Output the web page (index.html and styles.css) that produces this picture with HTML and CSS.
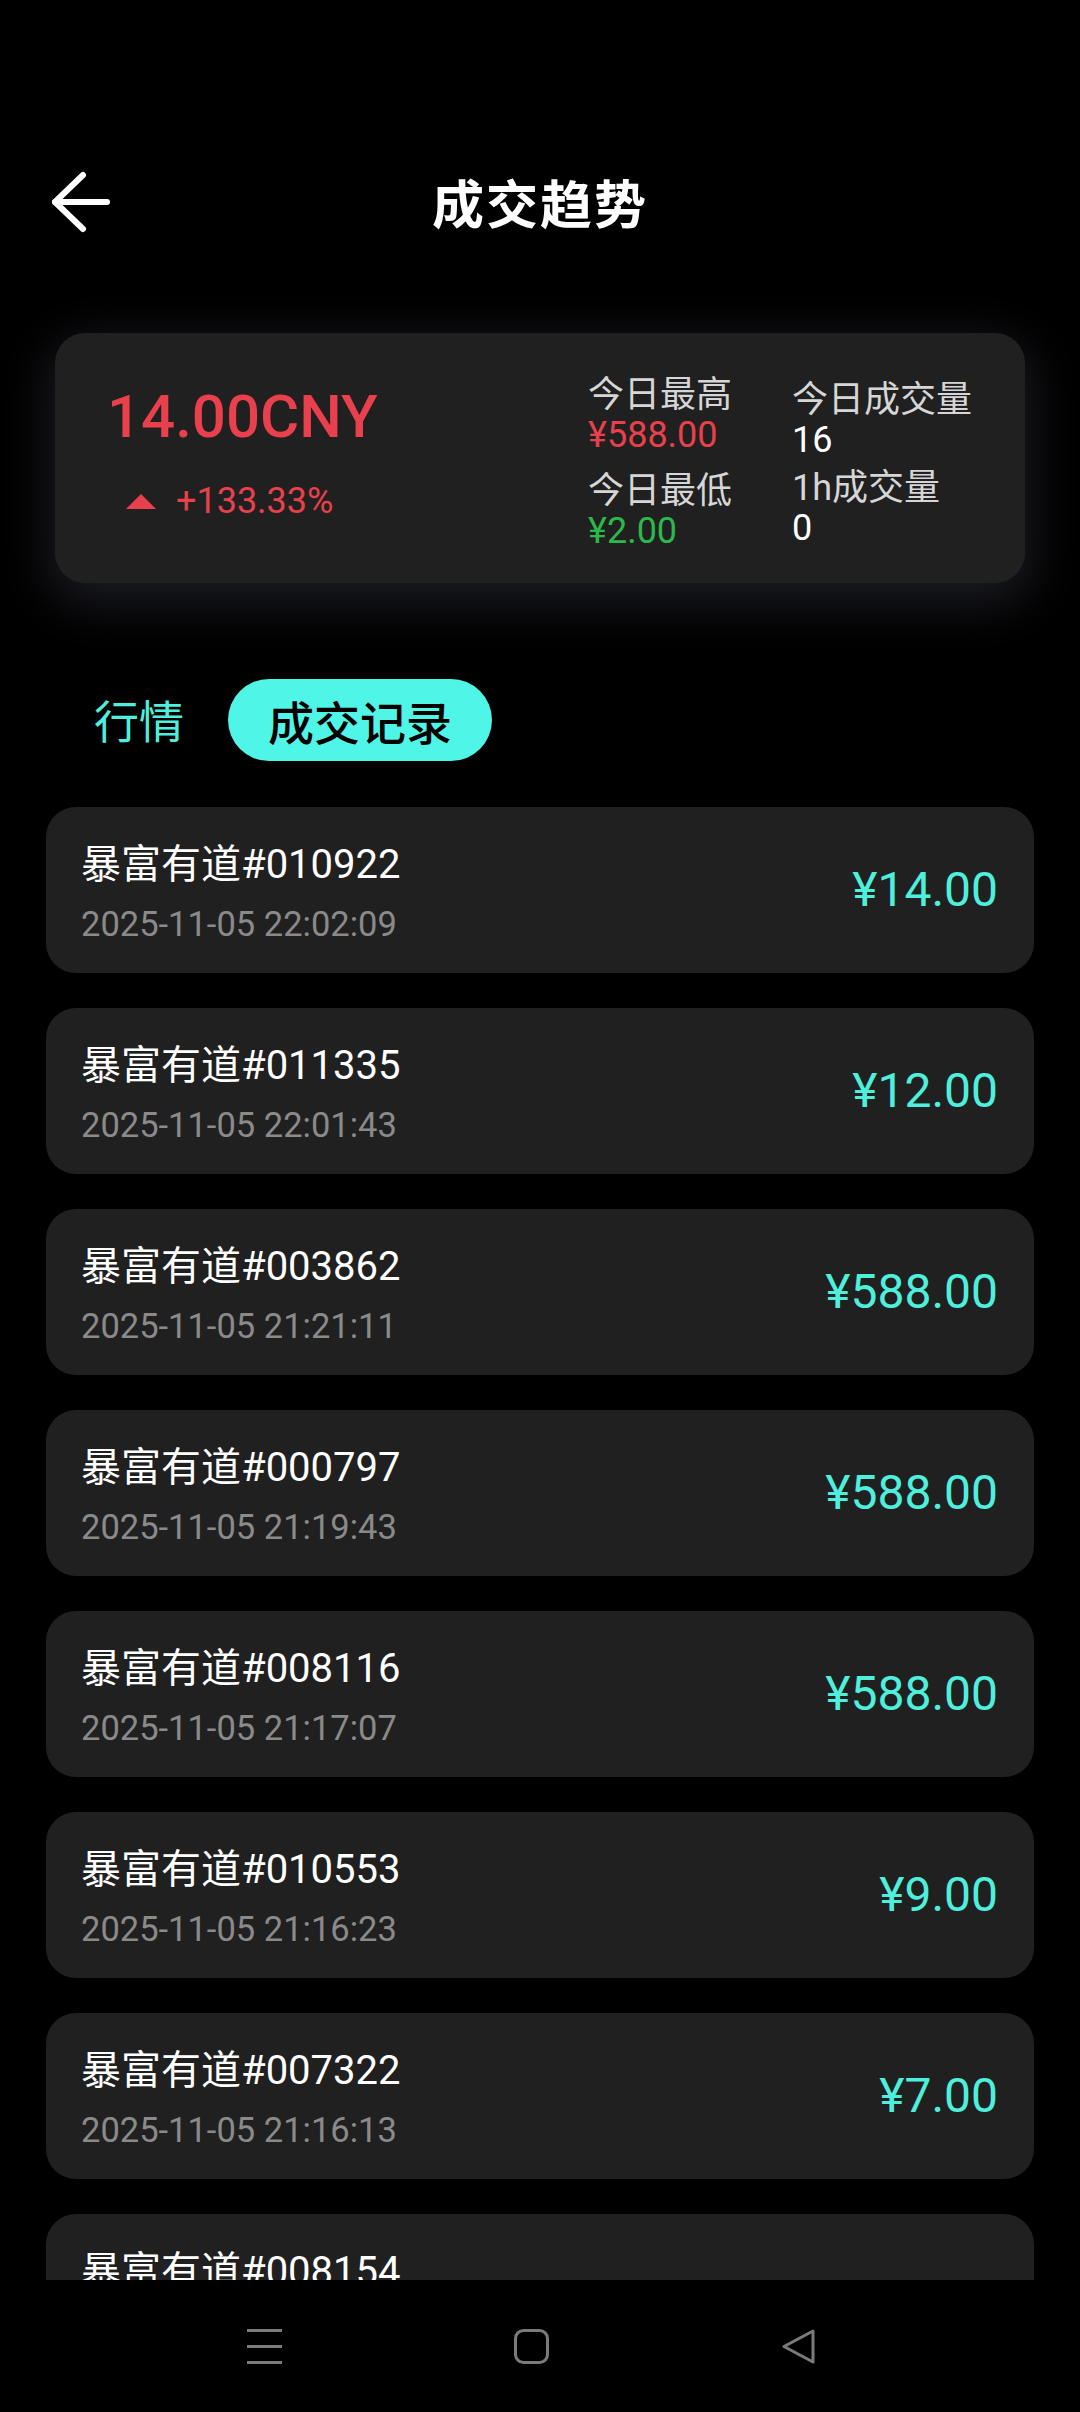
FILE: index.html
```html
<!DOCTYPE html>
<html lang="zh-CN">
<head>
<meta charset="utf-8">
<title>成交趋势</title>
<link rel="stylesheet" href="styles.css">
</head>
<body>
<div class="screen">
  <div class="content">
    <header class="topbar">
      <div class="back">
        <svg width="64" height="64" viewBox="0 0 64 64" fill="none" stroke="#ffffff" stroke-width="6" stroke-linecap="round" stroke-linejoin="round">
          <path d="M35 5 L7 32 L35 59"/>
          <path d="M7 32 H59"/>
        </svg>
      </div>
      <h1 class="title">成交趋势</h1>
      <div></div>
    </header>

    <section class="summary">
      <div class="summary-main">
        <div class="price-big">14.00CNY</div>
        <div class="change">
          <span class="tri"></span>
          <span>+133.33%</span>
        </div>
      </div>
      <div class="stats">
        <div class="stat-col stat-col-a">
          <div class="stat">
            <div class="stat-label">今日最高</div>
            <div class="stat-value red">¥588.00</div>
          </div>
          <div class="stat">
            <div class="stat-label">今日最低</div>
            <div class="stat-value green">¥2.00</div>
          </div>
        </div>
        <div class="stat-col stat-col-b">
          <div class="stat">
            <div class="stat-label">今日成交量</div>
            <div class="stat-value">16</div>
          </div>
          <div class="stat">
            <div class="stat-label">1h成交量</div>
            <div class="stat-value">0</div>
          </div>
        </div>
      </div>
    </section>

    <nav class="tabs">
      <span class="tab">行情</span>
      <span class="tab tab-active">成交记录</span>
    </nav>

    <ul class="list">
      <li class="item">
        <div class="item-info"><div class="item-name">暴富有道#010922</div><div class="item-time">2025-11-05 22:02:09</div></div>
        <div class="item-price">¥14.00</div>
      </li>
      <li class="item">
        <div class="item-info"><div class="item-name">暴富有道#011335</div><div class="item-time">2025-11-05 22:01:43</div></div>
        <div class="item-price">¥12.00</div>
      </li>
      <li class="item">
        <div class="item-info"><div class="item-name">暴富有道#003862</div><div class="item-time">2025-11-05 21:21:11</div></div>
        <div class="item-price">¥588.00</div>
      </li>
      <li class="item">
        <div class="item-info"><div class="item-name">暴富有道#000797</div><div class="item-time">2025-11-05 21:19:43</div></div>
        <div class="item-price">¥588.00</div>
      </li>
      <li class="item">
        <div class="item-info"><div class="item-name">暴富有道#008116</div><div class="item-time">2025-11-05 21:17:07</div></div>
        <div class="item-price">¥588.00</div>
      </li>
      <li class="item">
        <div class="item-info"><div class="item-name">暴富有道#010553</div><div class="item-time">2025-11-05 21:16:23</div></div>
        <div class="item-price">¥9.00</div>
      </li>
      <li class="item">
        <div class="item-info"><div class="item-name">暴富有道#007322</div><div class="item-time">2025-11-05 21:16:13</div></div>
        <div class="item-price">¥7.00</div>
      </li>
      <li class="item">
        <div class="item-info"><div class="item-name">暴富有道#008154</div></div>
      </li>
    </ul>
  </div>

  <footer class="navbar">
    <svg class="nav-icon" width="35" height="35" viewBox="0 0 35 35" fill="none" stroke="#7a7a7a" stroke-width="3">
      <path d="M0 1.5 H35 M0 17.5 H35 M0 33.5 H35"/>
    </svg>
    <svg class="nav-icon" width="35" height="35" viewBox="0 0 35 35" fill="none" stroke="#7a7a7a" stroke-width="3">
      <rect x="1.5" y="1.5" width="32" height="32" rx="8"/>
    </svg>
    <svg class="nav-icon" width="35" height="35" viewBox="0 0 35 35" fill="none" stroke="#7a7a7a" stroke-width="3" stroke-linejoin="round" stroke-linecap="round">
      <path d="M32 2 L3 17.5 L32 33 Z"/>
    </svg>
  </footer>
</div>
</body>
</html>
```

FILE: styles.css
```css
* {
  box-sizing: border-box;
  margin: 0;
  padding: 0;
}

html, body {
  background: #000;
}

body {
  font-family: "Roboto", "Noto Sans CJK SC", sans-serif;
  color: #fff;
}

.screen {
  width: 1080px;
  height: 2412px;
  display: flex;
  flex-direction: column;
  overflow: hidden;
  background: #000;
}

.content {
  height: 2280px;
  overflow: hidden;
  flex: none;
}

.topbar {
  display: grid;
  grid-template-columns: 1fr auto 1fr;
  align-items: center;
  height: 262px;
  padding-top: 142px;
}

.back {
  padding-left: 48px;
  display: flex;
  align-items: center;
}

.back svg {
  display: block;
}

.title {
  font-family: "Noto Sans CJK SC", sans-serif;
  font-size: 52px;
  font-weight: 700;
  line-height: 120px;
  letter-spacing: 2px;
}

.summary {
  margin: 71px 55px 0;
  background: #202020;
  border-radius: 30px;
  padding: 42px 53px 32px 52px;
  display: flex;
  box-shadow: 0 14px 50px 6px rgba(46, 48, 58, 0.6);
}

.summary-main {
  flex: 1;
  margin-top: 12px;
}

.price-big {
  color: #e8404c;
  font-size: 60px;
  font-weight: 500;
  line-height: 60px;
}

.change {
  margin-top: 36px;
  display: flex;
  align-items: center;
  gap: 20px;
  padding-left: 19px;
  color: #e8404c;
  font-size: 36px;
  line-height: 36px;
}

.tri {
  width: 0;
  height: 0;
  border-left: 15px solid transparent;
  border-right: 15px solid transparent;
  border-bottom: 15px solid #e8404c;
}

.stats {
  display: flex;
}

.stat-col {
  display: flex;
  flex-direction: column;
}

.stat-col-a {
  width: 204px;
  gap: 16px;
}

.stat-col-b {
  width: 180px;
  gap: 8px;
  padding-top: 5px;
}

.stat-label {
  font-size: 36px;
  line-height: 40px;
  color: #d6d6d6;
  white-space: nowrap;
}

.stat-value {
  font-size: 36px;
  line-height: 40px;
  color: #fff;
}

.red {
  color: #e8404c;
}

.green {
  color: #2db84c;
}

.tabs {
  margin-top: 96px;
  height: 82px;
  display: flex;
  align-items: center;
  gap: 44px;
  padding-left: 94px;
}

.tab {
  font-family: "Noto Sans CJK SC", sans-serif;
  font-size: 45px;
  line-height: 82px;
  color: #4eefdc;
}

.tab-active {
  background: #4ff5e6;
  color: #000;
  font-weight: 500;
  font-size: 46px;
  padding: 0 40px;
  border-radius: 41px;
}

.list {
  list-style: none;
  margin-top: 46px;
  padding: 0 46px;
  display: flex;
  flex-direction: column;
  gap: 35px;
}

.item {
  height: 166px;
  flex: none;
  background: #202020;
  border-radius: 30px;
  padding: 0 36px 0 35px;
  display: flex;
  align-items: center;
  justify-content: space-between;
}

.item-info {
  display: flex;
  flex-direction: column;
  gap: 13px;
  padding-top: 8px;
  align-self: stretch;
  justify-content: flex-start;
  margin-top: 26px;
}

.item-name {
  font-size: 40px;
  line-height: 48px;
  color: #fff;
}

.item-time {
  font-size: 34.5px;
  line-height: 44px;
  color: #8a8a8a;
}

.item-price {
  font-size: 48px;
  line-height: 48px;
  color: #4eefdc;
}

.navbar {
  height: 132px;
  flex: none;
  display: flex;
  align-items: center;
  gap: 232px;
  padding-left: 247px;
  background: #000;
}

.nav-icon {
  display: block;
}
```
